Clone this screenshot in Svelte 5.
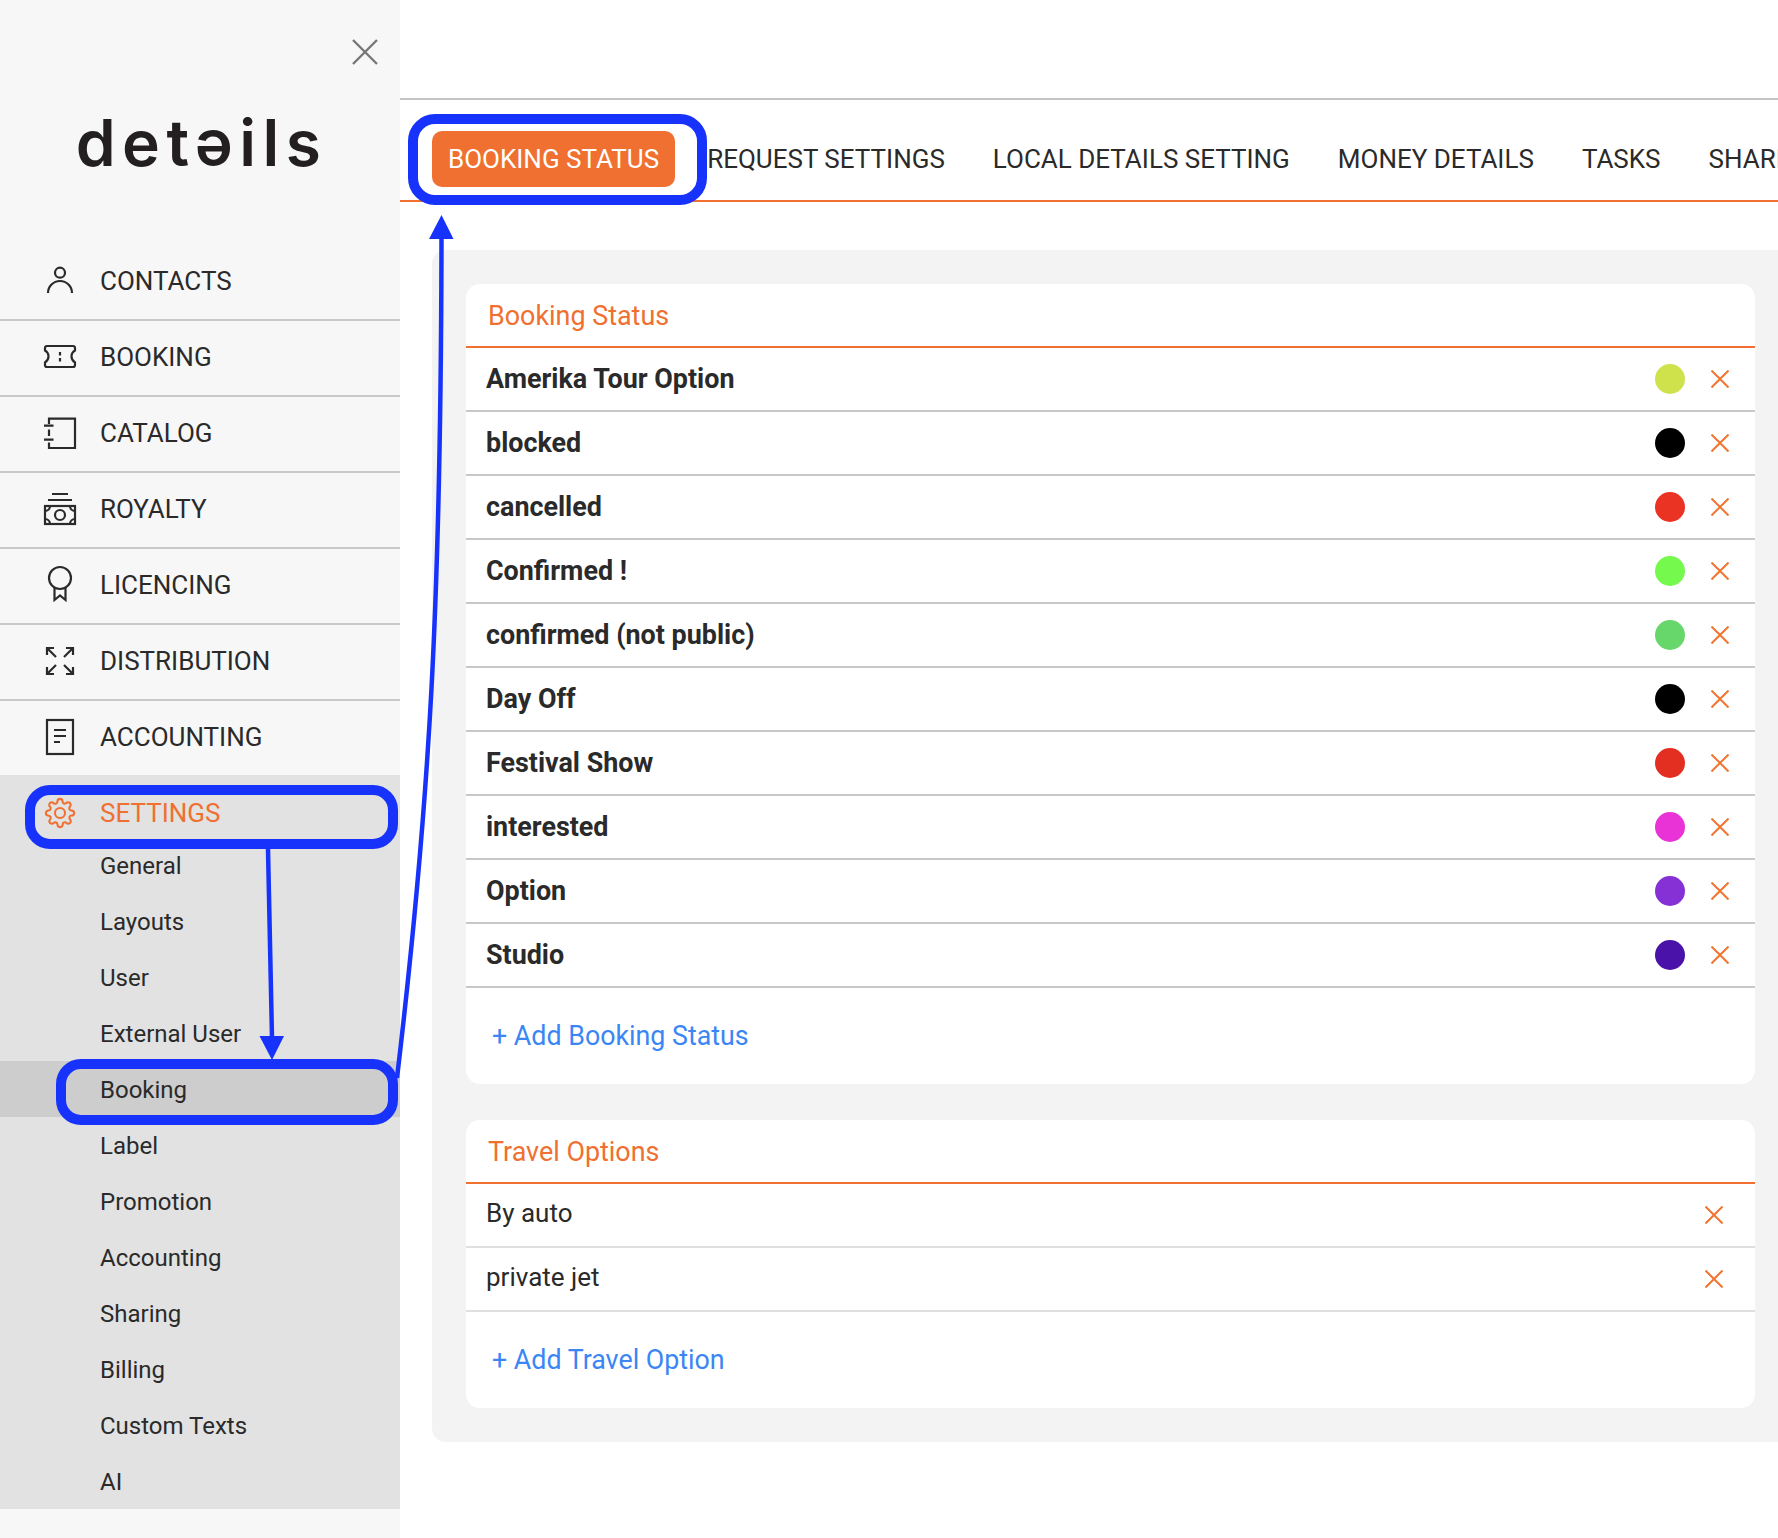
<script>
  const nav = [
    { label: 'CONTACTS', icon: 'contacts' },
    { label: 'BOOKING', icon: 'booking' },
    { label: 'CATALOG', icon: 'catalog' },
    { label: 'ROYALTY', icon: 'royalty' },
    { label: 'LICENCING', icon: 'licencing' },
    { label: 'DISTRIBUTION', icon: 'distribution' },
    { label: 'ACCOUNTING', icon: 'accounting' }
  ];

  const subnav = ['General', 'Layouts', 'User', 'External User', 'Booking', 'Label', 'Promotion', 'Accounting', 'Sharing', 'Billing', 'Custom Texts', 'AI'];

  const tabs = ['BOOKING STATUS', 'REQUEST SETTINGS', 'LOCAL DETAILS SETTING', 'MONEY DETAILS', 'TASKS', 'SHARING'];

  const statuses = [
    { name: 'Amerika Tour Option', color: '#cfe24c' },
    { name: 'blocked', color: '#000000' },
    { name: 'cancelled', color: '#ea3323' },
    { name: 'Confirmed !', color: '#75f94c' },
    { name: 'confirmed (not public)', color: '#67d76b' },
    { name: 'Day Off', color: '#000000' },
    { name: 'Festival Show', color: '#e32f22' },
    { name: 'interested', color: '#ea33d6' },
    { name: 'Option', color: '#8531d6' },
    { name: 'Studio', color: '#4a12a8' }
  ];

  const travel = ['By auto', 'private jet'];
</script>

<div class="page">
  <aside class="sidebar">
    <div class="side-top">
      <button class="close" aria-label="Close">
        <svg width="26" height="26" viewBox="0 0 26 26"><path d="M1 1 25 25M25 1 1 25" /></svg>
      </button>
      <div class="logo">detəils</div>
    </div>

    <nav>
      {#each nav as item}
        <div class="nav-row">
          <svg class="icon" width="36" height="36" viewBox="0 0 36 36">
            {#if item.icon === 'contacts'}
              <circle cx="18" cy="9.7" r="5" />
              <path d="M6 30a12 12 0 0 1 24 0" />
            {:else if item.icon === 'booking'}
              <path d="M5 7H31Q33 7 33 9V11.5Q29.5 13.5 29.5 17.5 29.5 21 33 23.5V26Q33 28 31 28H5Q3 28 3 26V23.5Q6.5 21 6.5 17.5 6.5 13.5 3 11.5V9Q3 7 5 7Z" />
              <path d="M18 13v3.5M18 19v3.5" />
            {:else if item.icon === 'catalog'}
              <path d="M7 9V3.7H33V33H7V27.5" />
              <path d="M2 10.7h9.5M2 24.7h9.5M7 14.5V21" />
            {:else if item.icon === 'royalty'}
              <path d="M10 3H26M6 9H30" />
              <rect x="3" y="15" width="30" height="18" />
              <circle cx="18" cy="24" r="5" />
              <path d="M3 20a5 5 0 0 0 5-5M33 20a5 5 0 0 1-5-5M3 28a5 5 0 0 1 5 5M33 28a5 5 0 0 0-5 5" />
            {:else if item.icon === 'licencing'}
              <circle cx="18" cy="11" r="11" />
              <path d="M12.5 21V33L18 28.5 23.5 33V21" />
            {:else if item.icon === 'distribution'}
              <path d="M5 12V5H12M5 5 14 14M24 5H31V12M31 5 22 14M5 24V31H12M5 31 14 22M31 24V31H24M31 31 22 22" />
            {:else if item.icon === 'accounting'}
              <rect x="5" y="1" width="26" height="34" />
              <path d="M12 11H24M12 17H24M12 23H18" />
            {/if}
          </svg>
          <span>{item.label}</span>
        </div>
      {/each}
    </nav>

    <div class="settings">
      <div class="settings-row">
        <svg class="icon gear" width="36" height="36" viewBox="-2 -2 28 28">
          <circle cx="12" cy="12" r="3.9" />
          <path d="M19.4 15a1.65 1.65 0 0 0 .33 1.82l.06.06a2 2 0 0 1 0 2.83 2 2 0 0 1-2.83 0l-.06-.06a1.65 1.65 0 0 0-1.82-.33 1.65 1.65 0 0 0-1 1.51V21a2 2 0 0 1-2 2 2 2 0 0 1-2-2v-.09A1.65 1.65 0 0 0 9 19.4a1.65 1.65 0 0 0-1.82.33l-.06.06a2 2 0 0 1-2.83 0 2 2 0 0 1 0-2.83l.06-.06a1.65 1.65 0 0 0 .33-1.82 1.65 1.65 0 0 0-1.51-1H3a2 2 0 0 1-2-2 2 2 0 0 1 2-2h.09A1.65 1.65 0 0 0 4.6 9a1.65 1.65 0 0 0-.33-1.82l-.06-.06a2 2 0 0 1 0-2.83 2 2 0 0 1 2.83 0l.06.06a1.65 1.65 0 0 0 1.82.33H9a1.65 1.65 0 0 0 1-1.51V3a2 2 0 0 1 2-2 2 2 0 0 1 2 2v.09a1.65 1.65 0 0 0 1 1.51 1.65 1.65 0 0 0 1.82-.33l.06-.06a2 2 0 0 1 2.83 0 2 2 0 0 1 0 2.83l-.06.06a1.65 1.65 0 0 0-.33 1.82V9a1.65 1.65 0 0 0 1.51 1H21a2 2 0 0 1 2 2 2 2 0 0 1-2 2h-.09a1.65 1.65 0 0 0-1.51 1z" />
        </svg>
        <span>SETTINGS</span>
      </div>
      {#each subnav as sub}
        <div class="sub-row" class:current={sub === 'Booking'}><span>{sub}</span></div>
      {/each}
    </div>
  </aside>

  <main>
    <div class="topbar"></div>

    <div class="tabs">
      {#each tabs as tab, i}
        <div class="tab" class:active={i === 0}>{tab}</div>
      {/each}
    </div>

    <div class="panel">
      <section class="card">
        <h2>Booking Status</h2>
        {#each statuses as s}
          <div class="row strong">
            <span class="name">{s.name}</span>
            <span class="dot" style="background: {s.color}"></span>
            <svg class="remove" width="18" height="18" viewBox="0 0 18 18"><path d="M0.5 0.5 17.5 17.5M17.5 0.5 0.5 17.5" /></svg>
          </div>
        {/each}
        <div class="add">+ Add Booking Status</div>
      </section>

      <section class="card">
        <h2>Travel Options</h2>
        {#each travel as t}
          <div class="row light">
            <span class="name">{t}</span>
            <svg class="remove" width="18" height="18" viewBox="0 0 18 18"><path d="M0.5 0.5 17.5 17.5M17.5 0.5 0.5 17.5" /></svg>
          </div>
        {/each}
        <div class="add">+ Add Travel Option</div>
      </section>
    </div>
  </main>

  <!-- hand drawn annotation layer -->
  <svg class="marks" width="1778" height="1538" viewBox="0 0 1778 1538">
    <rect x="413" y="119" width="289" height="81" rx="22" />
    <rect x="30" y="790" width="363" height="54" rx="20" />
    <rect x="61" y="1064" width="332" height="56" rx="20" />
    <path class="thin" d="M268 849 272 1038" />
    <path class="head" d="M259.500 1036H284L272 1060Z" />
    <path class="thin" d="M397 1078C430 800 441 600 441.500 238" />
    <path class="head" d="M429 239H453.500L441.500 215Z" />
  </svg>
</div>

<style>
  :global(body) {
    margin: 0;
    background: #fff;
  }

  .page {
    position: relative;
    display: flex;
    width: 1778px;
    height: 1538px;
    overflow: hidden;
    font-family: Roboto, "Liberation Sans", sans-serif;
    color: #2a2a2a;
  }

  .sidebar {
    flex: 0 0 400px;
    background: #f7f7f7;
  }

  .side-top {
    display: flex;
    flex-direction: column;
    height: 245px;
  }

  .close {
    align-self: flex-end;
    margin: 39px 22px 0 0;
    padding: 0;
    border: 0;
    background: none;
    line-height: 0;
  }

  .close path {
    fill: none;
    stroke: #777;
    stroke-width: 2.4;
  }

  .logo {
    margin-top: 38px;
    padding-left: 3px;
    text-align: center;
    font-family: Inter, sans-serif;
    font-size: 64px;
    font-weight: 600;
    line-height: 80px;
    letter-spacing: 6.5px;
    color: #231f20;
  }

  .nav-row {
    display: flex;
    align-items: center;
    height: 72px;
    padding: 0 0 2px 42px;
    gap: 22px;
    border-bottom: 2px solid #c8c8c8;
    font-size: 26px;
  }

  .nav-row:last-child {
    border-bottom: 0;
  }

  .icon {
    flex: none;
    overflow: visible;
  }

  .icon :global(*) {
    fill: none;
    stroke: #2a2a2a;
    stroke-width: 2.2;
  }

  .settings {
    background: #e2e2e2;
  }

  .settings-row {
    display: flex;
    align-items: center;
    height: 48px;
    padding: 14px 0 0 42px;
    gap: 22px;
    font-size: 26px;
    color: #ef7030;
  }

  .gear :global(*) {
    stroke: #ef7030;
    stroke-width: 1.6;
  }

  .sub-row {
    display: flex;
    align-items: center;
    height: 55px;
    padding: 1px 0 0 100px;
    font-size: 24px;
  }

  .sub-row.current {
    background: #cdcdcd;
  }

  main {
    flex: 1;
    min-width: 0;
  }

  .topbar {
    height: 98px;
    border-bottom: 2px solid #c4c4c4;
  }

  .tabs {
    display: flex;
    gap: 16px;
    padding: 31px 0 13px 32px;
    border-bottom: 2px solid #ef7030;
    white-space: nowrap;
  }

  .tab {
    display: flex;
    align-items: center;
    height: 56px;
    padding: 0 16px;
    font-size: 26px;
  }

  .tab.active {
    background: #ef7030;
    border-radius: 10px;
    color: #fff;
  }

  .panel {
    display: flex;
    flex-direction: column;
    gap: 36px;
    margin: 48px 0 0 32px;
    padding: 34px 23px 34px 34px;
    background: #f3f3f3;
    border-radius: 14px 0 0 14px;
  }

  .card {
    background: #fff;
    border-radius: 14px;
    overflow: hidden;
  }

  h2 {
    margin: 0;
    display: flex;
    align-items: center;
    height: 60px;
    padding: 2px 22px 0;
    border-bottom: 2px solid #ef7030;
    font-size: 26.9px;
    font-weight: 400;
    color: #ef7030;
  }

  .row {
    display: flex;
    align-items: center;
    height: 62px;
    padding: 0 22px 0 20px;
    border-bottom: 2px solid #c8c8c8;
    font-size: 26.9px;
  }

  .row.strong {
    font-weight: 700;
  }

  .row.light {
    border-bottom-color: #e0e0e0;
    font-size: 26px;
  }

  .row.light .name {
    position: relative;
    top: -2px;
  }

  .row.light .remove {
    margin-right: 10px;
  }

  .name {
    flex: 1;
  }

  .dot {
    width: 30px;
    height: 30px;
    border-radius: 50%;
    margin-right: 26px;
  }

  .remove path {
    fill: none;
    stroke: #ef7530;
    stroke-width: 2;
  }

  .remove {
    margin-right: 4px;
  }

  .add {
    display: flex;
    align-items: center;
    height: 96px;
    padding-left: 26px;
    font-size: 26.8px;
    color: #3b86f5;
  }

  .marks {
    position: absolute;
    left: 0;
    top: 0;
    pointer-events: none;
  }

  .marks rect {
    fill: none;
    stroke: #1733fb;
    stroke-width: 10;
  }

  .marks .thin {
    fill: none;
    stroke: #1733fb;
    stroke-width: 4.500;
  }

  .marks .head {
    fill: #1733fb;
  }
</style>
